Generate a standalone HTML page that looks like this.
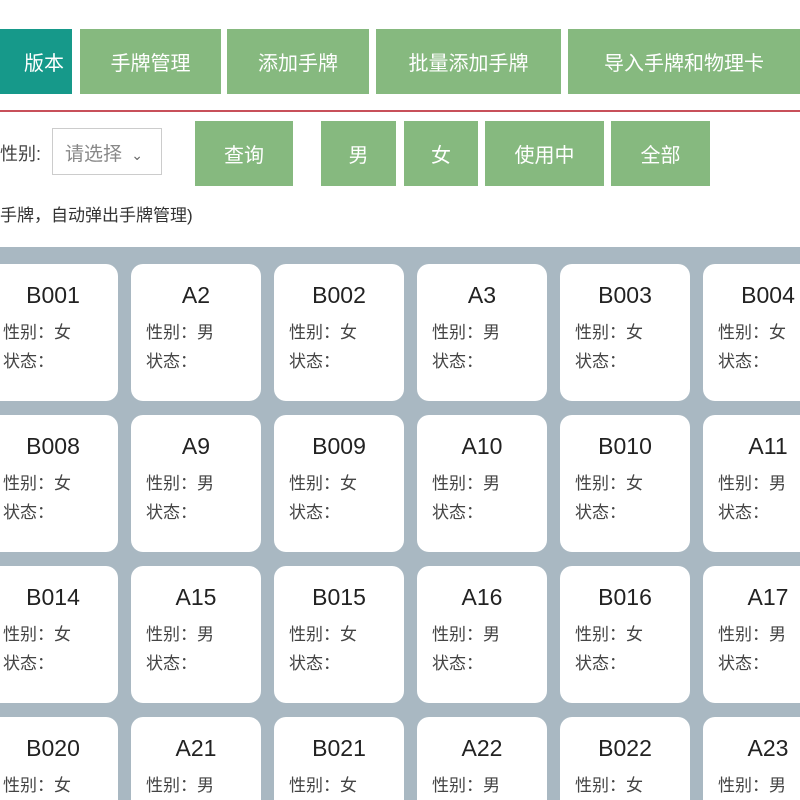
<!DOCTYPE html>
<html style="width:800px;height:800px;overflow:hidden"><head><meta charset="utf-8"><style>
*{margin:0;padding:0;box-sizing:border-box}
body{width:800px;height:800px;overflow:hidden;background:#fff;position:relative;font-family:"Liberation Sans","Noto Sans CJK SC",sans-serif}
.a{position:absolute}
.tab{position:absolute;top:29px;height:65px;background:#86b97f;color:#fff;font-size:20px;display:flex;align-items:center;justify-content:center}
.btn{position:absolute;top:121px;height:65px;background:#86b97f;color:#fff;font-size:20px;display:flex;align-items:center;justify-content:center}
.grid{position:absolute;top:247px;left:0;width:800px;height:553px;background:#a9b8c2;overflow:hidden}
.card{position:absolute;width:130px;height:137px;background:#fff;border-radius:12px;color:#333;overflow:hidden}
.card .t{position:absolute;top:18px;left:0;width:100%;text-align:center;font-size:23px;color:#222}
.card .l{position:absolute;left:15px;font-size:17px;color:#444}
</style></head><body>
<div class="tab" style="left:0;width:72px;background:#16998a;justify-content:flex-end;padding-right:8px">版本</div>
<div class="tab" style="left:80px;width:141px">手牌管理</div>
<div class="tab" style="left:227px;width:142px">添加手牌</div>
<div class="tab" style="left:376px;width:185px">批量添加手牌</div>
<div class="tab" style="left:568px;width:232px">导入手牌和物理卡</div>
<div class="a" style="left:0;top:110px;width:800px;height:2px;background:#c8505a"></div>
<div class="a" style="left:0;top:140px;font-size:18px;color:#444">性别:</div>
<div class="a" style="left:52px;top:128px;width:110px;height:47px;border:1px solid #ccc;font-size:19px;color:#888;padding:10px 0 0 12px">请选择 <span style="font-size:14px;color:#666;margin-left:4px">&#8964;</span></div>
<div class="btn" style="left:195px;width:98px">查询</div>
<div class="btn" style="left:321px;width:75px">男</div>
<div class="btn" style="left:404px;width:74px">女</div>
<div class="btn" style="left:485px;width:119px">使用中</div>
<div class="btn" style="left:611px;width:99px">全部</div>
<div class="a" style="left:0;top:201px;font-size:17px;color:#333">手牌，自动弹出手牌管理)</div>
<div class="grid" id="g"></div>
<script>
var names=[["B001","A2","B002","A3","B003","B004"],["B008","A9","B009","A10","B010","A11"],["B014","A15","B015","A16","B016","A17"],["B020","A21","B021","A22","B022","A23"]];
var g=document.getElementById('g'),h='';
for(var r=0;r<4;r++)for(var c=0;c<6;c++){var n=names[r][c];var f=n[0]=='B'?'女':'男';var t=17+r*151;var ht=Math.min(137,553-t);var l=-12+c*143;var w=Math.min(130,800-l);
var cb=ht<137,cr=w<130;var rad='12px '+(cr?'0':'12px')+' '+(cb||cr?'0':'12px')+' '+(cb?'0':'12px');
h+='<div class="card" style="left:'+l+'px;top:'+t+'px;height:'+ht+'px;width:'+w+'px;border-radius:'+rad+'"><div class="t" style="width:130px">'+n+'</div><div class="l" style="top:54px">性别：'+f+'</div>'+(ht>100?'<div class="l" style="top:83px">状态：</div>':'')+'</div>';}
g.innerHTML=h;
</script>
</body></html>
